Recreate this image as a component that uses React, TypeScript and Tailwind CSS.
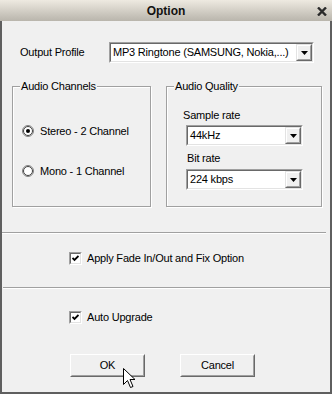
import React from 'react';

const font = { fontFamily: '"Liberation Sans", Arial, sans-serif' };

function Select({ value, className }: { value: string; className: string }) {
    return (
        <div className={`h-[21px] border border-t-[#a0a0a0] border-l-[#a0a0a0] border-b-white border-r-white ${className}`}>
            <div className="h-full flex border border-t-[#696969] border-l-[#696969] border-b-[#e3e3e3] border-r-[#e3e3e3] bg-white">
                <div className="flex-1 flex items-center pl-[2px] text-[11px] leading-none text-black whitespace-nowrap overflow-hidden">
                    {value}
                </div>
                <div className="w-[16px] h-full border border-t-[#e3e3e3] border-l-[#e3e3e3] border-b-[#696969] border-r-[#696969]">
                    <div className="h-full flex items-center justify-center bg-[#f0f0f0] border border-t-white border-l-white border-b-[#a0a0a0] border-r-[#a0a0a0]">
                        <svg width="7" height="4" viewBox="0 0 7 4">
                            <path d="M0 0 H7 L3.5 4 Z" fill="#000" />
                        </svg>
                    </div>
                </div>
            </div>
        </div>
    );
}

function Radio({ checked }: { checked?: boolean }) {
    return (
        <svg width="12" height="12" viewBox="0 0 12 12" className="shrink-0">
            <circle cx="6" cy="6" r="5.5" fill="#fff" stroke="#808080" strokeWidth="1" />
            <circle cx="6" cy="6" r="4.5" fill="#fff" stroke="#404040" strokeWidth="1" />
            {checked && <circle cx="6" cy="6" r="2" fill="#000" />}
        </svg>
    );
}

function Checkbox() {
    return (
        <div className="w-[13px] h-[13px] shrink-0 border border-t-[#a0a0a0] border-l-[#a0a0a0] border-b-white border-r-white">
            <div className="w-full h-full bg-white border border-t-[#696969] border-l-[#696969] border-b-[#e3e3e3] border-r-[#e3e3e3] flex items-center justify-center">
                <svg width="7" height="7" viewBox="0 0 7 7">
                    <path d="M0.5 3 L2.5 5 L6.5 1" fill="none" stroke="#000" strokeWidth="1.8" />
                </svg>
            </div>
        </div>
    );
}

function Button({ label }: { label: string }) {
    return (
        <div className="w-[75px] h-[23px] border border-t-white border-l-white border-b-[#696969] border-r-[#696969]">
            <div className="h-full flex items-center justify-center bg-[#f0f0f0] border border-t-[#f0f0f0] border-l-[#f0f0f0] border-b-[#a0a0a0] border-r-[#a0a0a0] text-[11px] text-black tracking-[-0.2px]">
                {label}
            </div>
        </div>
    );
}

function Separator({ className }: { className?: string }) {
    return (
        <div className={`h-[2px] border-t border-t-[#a0a0a0] border-b border-b-white ${className ?? ''}`} />
    );
}

export default function App() {
    return (
        <div style={font} className="w-[332px] h-[394px] flex flex-col relative select-none text-black">
            {/* Title bar */}
            <div className="h-[21px] shrink-0 relative flex items-center justify-center bg-gradient-to-b from-[#eeeae1] to-[#b9b5ac]">
                <span className="text-[12px] font-bold text-[#111] leading-none">Option</span>
                <svg className="absolute right-[5px] top-[7px]" width="10" height="9" viewBox="0 0 10 9">
                    <path d="M1 0.5 L9 8.5 M9 0.5 L1 8.5" stroke="#2a2a2a" strokeWidth="2.4" />
                </svg>
            </div>

            {/* Body */}
            <div className="flex-1 flex flex-col bg-[#f0f0f0] border-l-2 border-r-2 border-b-2 border-[#5f5f5f] text-[11px] tracking-[-0.2px]">
                {/* Output profile */}
                <div className="mt-[21px] flex items-center h-[21px]">
                    <span className="ml-[18px] w-[89px]">Output Profile</span>
                    <Select value="MP3 Ringtone (SAMSUNG, Nokia,...)" className="w-[205px]" />
                </div>

                {/* Groups */}
                <div className="mt-[23px] flex ml-[10px] gap-[15px]">
                    <div className="relative w-[139px] h-[121px] border border-[#a0a0a0] shadow-[inset_1px_1px_0_#fff,1px_1px_0_#fff]">
                        <span className="absolute -top-[8px] left-[7px] px-[1px] bg-[#f0f0f0] leading-[14px]">Audio Channels</span>
                        <div className="flex flex-col pt-[38px] pl-[9px] gap-[28px]">
                            <div className="flex items-center gap-[6px] h-[12px]">
                                <Radio checked />
                                <span>Stereo - 2 Channel</span>
                            </div>
                            <div className="flex items-center gap-[6px] h-[12px]">
                                <Radio />
                                <span>Mono - 1 Channel</span>
                            </div>
                        </div>
                    </div>

                    <div className="relative w-[156px] h-[121px] border border-[#a0a0a0] shadow-[inset_1px_1px_0_#fff,1px_1px_0_#fff]">
                        <span className="absolute -top-[8px] left-[7px] px-[1px] bg-[#f0f0f0] leading-[14px]">Audio Quality</span>
                        <div className="flex flex-col pt-[21px]">
                            <span className="ml-[16px] leading-[14px]">Sample rate</span>
                            <Select value="44kHz" className="mt-[3px] ml-[19px] w-[117px]" />
                            <span className="mt-[5px] ml-[20px] leading-[14px]">Bit rate</span>
                            <Select value="224 kbps" className="mt-[4px] ml-[19px] w-[117px]" />
                        </div>
                    </div>
                </div>

                <Separator className="mt-[25px] mr-[4px]" />

                <div className="mt-[18px] ml-[67px] flex items-center gap-[5px] h-[13px]">
                    <Checkbox />
                    <span>Apply Fade In/Out and Fix Option</span>
                </div>

                <Separator className="mt-[22px] ml-[1px]" />

                <div className="mt-[22px] ml-[67px] flex items-center gap-[5px] h-[13px]">
                    <Checkbox />
                    <span>Auto Upgrade</span>
                </div>

                <div className="mt-[30px] ml-[68px] flex gap-[35px]">
                    <Button label="OK" />
                    <Button label="Cancel" />
                </div>
            </div>

            {/* Mouse pointer */}
            <svg className="absolute left-[122px] top-[367px]" width="14" height="23" viewBox="0 0 14 23">
                <path
                    d="M1.5 1.5 L1.5 17.5 L5.5 13.5 L8.5 20.5 L11 19.5 L8 12.5 L13 12.5 Z"
                    fill="#fff"
                    stroke="#000"
                    strokeWidth="1"
                    strokeLinejoin="miter"
                />
            </svg>
        </div>
    );
}
